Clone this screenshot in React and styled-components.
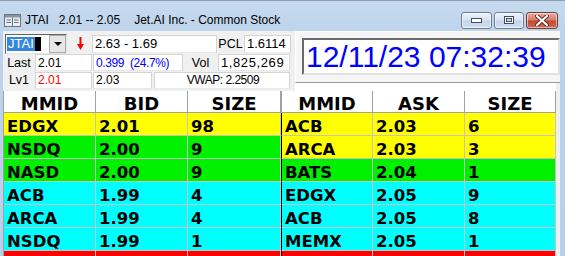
import React from "react";
import styled, { createGlobalStyle } from "styled-components";

const Global = createGlobalStyle`
  html, body { margin: 0; padding: 0; width: 565px; height: 256px; overflow: hidden; background: #bcd2ea; }
  #root { width: 565px; height: 256px; }
`;

const Window = styled.div`
  width: 565px;
  height: 256px;
  box-sizing: border-box;
  display: flex;
  flex-direction: column;
  overflow: hidden;
  border-top: 1px solid #8d9db4;
  background: linear-gradient(180deg, #c6d9ef 0px, #bcd3eb 40px, #b9d0ea 100%);
  font-family: "Liberation Sans", Arial, sans-serif;
`;

const TitleBar = styled.div`
  height: 30px;
  box-sizing: border-box;
  padding: 8px 7px 0 4px;
  display: flex;
  align-items: center;
  font-size: 12px;
  line-height: 14px;
  color: #000;
  white-space: nowrap;
`;

const TitleText = styled.span`
  margin-left: ${(p) => p.$gap}px;
`;

const WinButtons = styled.div`
  margin-left: auto;
  display: flex;
  gap: 2px;
  align-items: center;
`;

const WinButton = styled.div`
  width: ${(p) => p.$w}px;
  height: 17px;
  box-sizing: border-box;
  border: 1px solid ${(p) => (p.$close ? "#6e3a33" : "#6f7f98")};
  border-radius: 3px;
  display: flex;
  align-items: center;
  justify-content: center;
  background: ${(p) =>
    p.$close
      ? "linear-gradient(180deg, #e9a99c 0%, #d7806f 45%, #c4482f 55%, #cf6a52 100%)"
      : "linear-gradient(180deg, #eef3fa 0%, #d9e4f2 45%, #c4d4ea 55%, #d3e0f1 100%)"};
  box-shadow: inset 0 0 0 1px rgba(255, 255, 255, 0.55);
`;

const Client = styled.div`
  flex: 1;
  margin: 0 5px 0 3px;
  background: #f0f0f0;
  display: flex;
  flex-direction: column;
  min-height: 0;
`;

const TopSection = styled.div`
  height: 60px;
  display: flex;
`;

const Controls = styled.div`
  width: 292px;
  padding-top: 2px;
  box-sizing: border-box;
  display: flex;
  flex-direction: column;
`;

const CtrlRow = styled.div`
  height: ${(p) => p.$h}px;
  display: flex;
  align-items: center;
`;

const Combo = styled.div`
  margin-left: 2px;
  width: 62px;
  height: 20px;
  box-sizing: border-box;
  background: #fff;
  border-top: 1px solid #646464;
  border-left: 1px solid #646464;
  border-right: 1px solid #e3e3e3;
  border-bottom: 1px solid #e3e3e3;
  display: flex;
  align-items: center;
  padding-left: 1px;
`;

const Selected = styled.span`
  background: #3388dd;
  color: #fff;
  font-size: 13px;
  line-height: 14px;
  padding: 0 1px;
`;

const Caret = styled.span`
  width: 6px;
  height: 14px;
  background: #000;
`;

const DropButton = styled.div`
  margin-left: auto;
  width: 17px;
  height: 18px;
  box-sizing: border-box;
  background: #e6e6e6;
  border: 1px solid #adadad;
  display: flex;
  align-items: center;
  justify-content: center;
`;

const Arrow = styled.svg`
  margin-left: ${(p) => p.$ml}px;
  flex: none;
`;

const Field = styled.div`
  margin-left: ${(p) => p.$ml || 0}px;
  width: ${(p) => p.$w}px;
  height: ${(p) => p.$h || 17}px;
  box-sizing: border-box;
  background: #fff;
  border: 1px solid #d4d4d4;
  border-bottom-color: #e8e8e8;
  padding-left: 2px;
  display: flex;
  align-items: center;
  justify-content: ${(p) => (p.$center ? "center" : "flex-start")};
  font-size: ${(p) => p.$fs || 12}px;
  letter-spacing: ${(p) => p.$ls || 0}px;
  color: ${(p) => p.$color || "#000"};
  white-space: pre;
  overflow: hidden;
`;

const Label = styled.div`
  width: ${(p) => p.$w}px;
  margin-left: ${(p) => p.$ml || 0}px;
  text-align: ${(p) => p.$align || "center"};
  font-size: 12.5px;
  color: #000;
  white-space: nowrap;
`;

const RightTop = styled.div`
  flex: 1;
  display: flex;
  flex-direction: column;
`;

const ClockPanel = styled.div`
  height: 52px;
  box-sizing: border-box;
  background: #f6f6f6;
  border-top: 1px solid #fff;
  border-left: 1px solid #fff;
  border-bottom: 1px solid #9a9a9a;
  padding: 6px 0 0 6px;
`;

const ClockBox = styled.div`
  width: 258px;
  height: 37px;
  box-sizing: border-box;
  background: #fff;
  border-top: 2px solid #6b6b6b;
  border-left: 2px solid #6b6b6b;
  border-right: 2px solid #e2e2e2;
  border-bottom: 2px solid #e2e2e2;
  padding-left: 2px;
  font-family: "Liberation Sans", Arial, sans-serif;
  font-size: 30px;
  line-height: 33px;
  color: #0000ff;
  white-space: nowrap;
`;

const WhiteStrip = styled.div`
  flex: 1;
  background: #fff;
  margin-right: 4px;
`;

const Book = styled.div`
  display: flex;
  width: 553px;
  flex: 1;
  min-height: 0;
  overflow: hidden;
  background: #fff;
`;

const Side = styled.div`
  display: grid;
  grid-template-columns: ${(p) => p.$cols};
  grid-auto-rows: min-content;
  border-left: ${(p) => (p.$left ? "1px solid #a0a0a0" : "none")};
  align-content: start;
`;

const HeadCell = styled.div`
  height: 22px;
  box-sizing: border-box;
  padding-top: 4px;
  border-right: 1px solid #a0a0a0;
  border-bottom: 1px solid #a0a0a0;
  border-left: ${(p) => (p.$edge ? "1px solid #a0a0a0" : "none")};
  background: #fff;
  text-align: center;
  font-family: "DejaVu Sans", Verdana, sans-serif;
  font-weight: bold;
  font-size: 18px;
  line-height: 17px;
  color: #000;
`;

const rowColors = { y: "#ffff00", g: "#00f000", c: "#00ffff", r: "#ff0000" };

const Cell = styled.div`
  height: 23px;
  box-sizing: border-box;
  padding: 5px 0 0 ${(p) => (p.$first ? 3 : 3)}px;
  border-right: 1px solid #c4c4c4;
  border-bottom: 1px solid #c4c4c4;
  border-left: ${(p) => (p.$edge ? "1px solid #000" : "none")};
  background: ${(p) => rowColors[p.$bg]};
  font-family: "DejaVu Sans", Verdana, sans-serif;
  font-weight: bold;
  font-size: 16.5px;
  line-height: 17px;
  color: #000;
  white-space: nowrap;
  overflow: hidden;
`;

const bids = [
  ["EDGX", "2.01", "98", "y"],
  ["NSDQ", "2.00", "9", "g"],
  ["NASD", "2.00", "9", "g"],
  ["ACB", "1.99", "4", "c"],
  ["ARCA", "1.99", "4", "c"],
  ["NSDQ", "1.99", "1", "c"],
  ["", "", "", "r"],
];

const asks = [
  ["ACB", "2.03", "6", "y"],
  ["ARCA", "2.03", "3", "y"],
  ["BATS", "2.04", "1", "g"],
  ["EDGX", "2.05", "9", "c"],
  ["ACB", "2.05", "8", "c"],
  ["MEMX", "2.05", "1", "c"],
  ["", "", "", "r"],
];

function AppIcon() {
  return (
    <svg width="17" height="13" viewBox="0 0 17 13">
      <rect x="0.5" y="0.5" width="16" height="12" fill="#e9eef5" stroke="#6c7480" />
      <rect x="1" y="1" width="15" height="2.5" fill="#8c96a3" />
      <line x1="8.5" y1="3.5" x2="8.5" y2="12" stroke="#6c7480" />
      <line x1="2.5" y1="6" x2="7" y2="6" stroke="#6c7480" />
      <line x1="2.5" y1="8.5" x2="7" y2="8.5" stroke="#6c7480" />
      <line x1="10" y1="6" x2="14.5" y2="6" stroke="#6c7480" />
      <line x1="10" y1="8.5" x2="14.5" y2="8.5" stroke="#6c7480" />
    </svg>
  );
}

function Book_Side({ rows, head, cols, left, askSide }) {
  return (
    <Side $cols={cols} $left={left}>
      {head.map((h, i) => (
        <HeadCell key={h + i} $edge={askSide && i === 0}>
          {h}
        </HeadCell>
      ))}
      {rows.map((r, ri) =>
        [0, 1, 2].map((ci) => (
          <Cell key={ri + "-" + ci} $bg={r[3]} $edge={askSide && ci === 0} $first={ci === 0}>
            {r[ci]}
          </Cell>
        ))
      )}
    </Side>
  );
}

export default function App() {
  return (
    <>
      <Global />
      <Window>
        <TitleBar>
          <AppIcon />
          <TitleText $gap={4}>JTAI</TitleText>
          <TitleText $gap={10}>2.01 -- 2.05</TitleText>
          <TitleText $gap={14}>Jet.AI Inc. - Common Stock</TitleText>
          <WinButtons>
            <WinButton $w={31}>
              <svg width="11" height="5" viewBox="0 0 11 5">
                <rect x="0.5" y="0.5" width="10" height="4" fill="#fff" stroke="#3f4e66" />
              </svg>
            </WinButton>
            <WinButton $w={30}>
              <svg width="10" height="8" viewBox="0 0 10 8">
                <rect x="0.5" y="0.5" width="9" height="7" fill="#fff" stroke="#3f4e66" />
                <rect x="2.5" y="2.5" width="5" height="3" fill="#cdd9e9" stroke="#3f4e66" />
              </svg>
            </WinButton>
            <WinButton $w={32} $close>
              <svg width="14" height="11" viewBox="0 0 14 11">
                <path d="M2 1 L12 10 M12 1 L2 10" stroke="#5a2a22" strokeWidth="4" strokeLinecap="round" />
                <path d="M2 1 L12 10 M12 1 L2 10" stroke="#fff" strokeWidth="2.2" strokeLinecap="round" />
              </svg>
            </WinButton>
          </WinButtons>
        </TitleBar>
        <Client>
          <TopSection>
            <Controls>
              <CtrlRow $h={21}>
                <Combo>
                  <Selected>JTAI</Selected>
                  <Caret />
                  <DropButton>
                    <svg width="8" height="4" viewBox="0 0 8 4">
                      <path d="M0 0 L8 0 L4 4 Z" fill="#000" />
                    </svg>
                  </DropButton>
                </Combo>
                <Arrow $ml={10} width="7" height="13" viewBox="0 0 7 13">
                  <rect x="2.5" y="0" width="2" height="8" fill="#ff0000" />
                  <path d="M0 7 L7 7 L3.5 13 Z" fill="#ff0000" />
                </Arrow>
                <Field $ml={8} $w={125} $h={18} $fs={13}>2.63 - 1.69</Field>
                <Label $w={27}>PCL</Label>
                <Field $w={47} $h={18} $fs={13}>1.6114</Field>
              </CtrlRow>
              <CtrlRow $h={17}>
                <Label $w={32}>Last</Label>
                <Field $w={57}>2.01</Field>
                <Field $ml={1} $w={90} $color="#0000ff" $ls={-0.4}>0.399  (24.7%)</Field>
                <Label $w={35}>Vol</Label>
                <Field $w={72} $fs={13} $ls={0.6}>1,825,269</Field>
              </CtrlRow>
              <CtrlRow $h={18}>
                <Label $w={32}>Lv1</Label>
                <Field $w={57} $color="#ff0000">2.01</Field>
                <Field $ml={1} $w={59}>2.03</Field>
                <Field $ml={2} $w={136} $center $ls={-0.5}>VWAP: 2.2509</Field>
              </CtrlRow>
            </Controls>
            <RightTop>
              <ClockPanel>
                <ClockBox>12/11/23 07:32:39</ClockBox>
              </ClockPanel>
              <WhiteStrip />
            </RightTop>
          </TopSection>
          <Book>
            <Book_Side rows={bids} head={["MMID", "BID", "SIZE"]} cols="92px 92px 93px" left />
            <Book_Side rows={asks} head={["MMID", "ASK", "SIZE"]} cols="92px 92px 91px" askSide />
          </Book>
        </Client>
      </Window>
    </>
  );
}
